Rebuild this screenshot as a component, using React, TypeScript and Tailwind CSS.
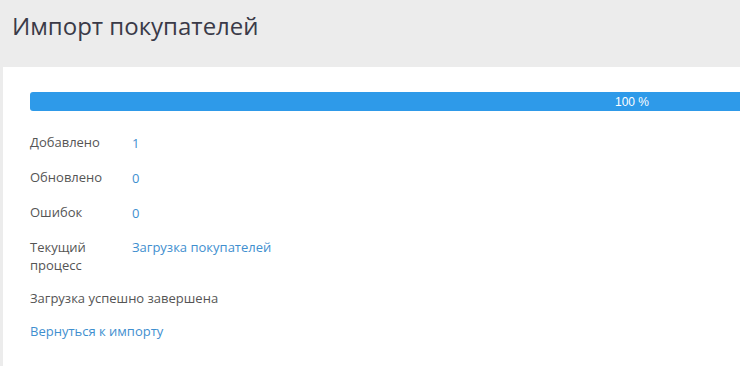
const rows = [
  { label: 'Добавлено', value: '1' },
  { label: 'Обновлено', value: '0' },
  { label: 'Ошибок', value: '0' },
]

export default function App() {
  return (
    <div className="h-[366px] w-full overflow-hidden bg-[#ececec] font-['Open_Sans',sans-serif]">
      <div className="w-[1240px]">
        <div className="h-[67px] px-3 pt-[10px]">
          <h1 className="text-[24px] leading-[32px] text-[#3a3a48]">Импорт покупателей</h1>
        </div>
        <div className="ml-[3px] h-[300px] bg-white pl-[27px] pt-[25px]">
          <div className="flex h-[19px] w-[1204px] items-center justify-center rounded-[3px] bg-[#2e9ae9] font-['Liberation_Sans',sans-serif] text-[12px] text-white">
            100 %
          </div>
          <div className="mt-[22px] text-[13px] leading-[18px] text-[#555]">
            {rows.map((r) => (
              <div key={r.label} className="mb-[16px] flex">
                <div className="w-[102px]">{r.label}</div>
                <div className="pt-[1px] text-[#3f8fcf]">{r.value}</div>
              </div>
            ))}
            <div className="mb-[15px] flex">
              <div className="w-[102px]">
                Текущий
                <br />
                процесс
              </div>
              <div className="text-[#3f8fcf]">Загрузка покупателей</div>
            </div>
            <div className="mb-[15px]">Загрузка успешно завершена</div>
            <div className="text-[#3f8fcf]">Вернуться к импорту</div>
          </div>
        </div>
      </div>
    </div>
  )
}
